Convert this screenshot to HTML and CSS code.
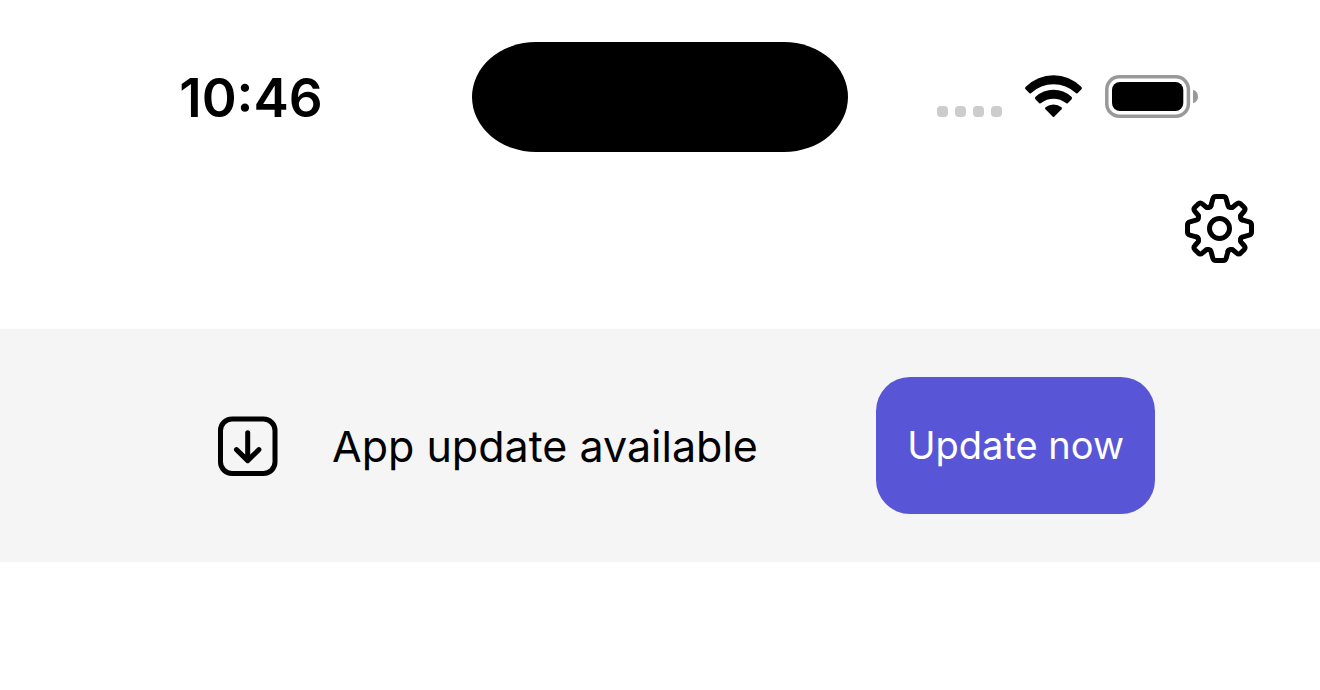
FILE: index.html
```html
<!DOCTYPE html>
<html lang="en">
<head>
    <meta charset="UTF-8">
    <meta name="viewport" content="width=device-width, initial-scale=1.0">
    <title>App update</title>
    <link rel="stylesheet" href="styles.css">
</head>
<body>
    <div class="status-bar">
        <div class="time">10:46</div>
        <div class="island"></div>
        <div class="status-icons">
            <div class="signal">
                <span class="signal-dot"></span>
                <span class="signal-dot"></span>
                <span class="signal-dot"></span>
                <span class="signal-dot"></span>
            </div>
            <svg class="wifi" width="57" height="43" viewBox="0 0 57 43" aria-hidden="true">
                <path d="M.8 11.8A39 39 0 0 1 56.2 11.8Q57.5 13 56.4 14.3L52.8 18Q51.9 19 50.8 17.9A33 33 0 0 0 6.2 17.9Q5.1 19 4.2 18L.6 14.3Q-.5 13 .8 11.8Z"/>
                <path d="M10.6 21.8A26 26 0 0 1 46.4 21.8Q47.7 23 46.6 24.3L43 28Q42 29 40.9 28.1A20 20 0 0 0 16.1 28.1Q15 29 14 28L10.4 24.3Q9.3 23 10.6 21.8Z"/>
                <path d="M20.5 32.2A13 13 0 0 1 36.5 32.2Q37.5 33.1 36.5 34.2L29.2 41.7Q28.5 42.4 27.8 41.7L20.5 34.2Q19.5 33.1 20.5 32.2Z"/>
            </svg>
            <svg class="battery" width="93" height="43" viewBox="0 0 93 43" aria-hidden="true">
                <rect x="1.8" y="1.8" width="81.6" height="39.4" rx="12.5" fill="none" stroke="#999" stroke-width="3.5"/>
                <rect x="7" y="7" width="71.3" height="29" rx="8"/>
                <path d="M88 14.8Q93 16.5 93 21.5T88 28.2Z" fill="#999"/>
            </svg>
        </div>
    </div>

    <header class="toolbar">
        <button class="settings-btn" type="button" aria-label="Settings">
            <svg width="69" height="69" viewBox="-34.5 -34.5 69 69" aria-hidden="true">
                <defs>
                    <path id="gear-quarter" d="M-8.6 -22.6L-6.7 -29.6Q-6 -32-3.6 -32H3.6Q6 -32 6.7 -29.6L8.6 -22.6Q9 -21.4 10.2 -21.1L12.8 -21L17.2 -24.6Q19.3 -26.4 21.2 -24.6L24.6 -21.2Q26.4 -19.3 24.6 -17.2L21 -12.8L21.1 -10.2Q21.4 -9 22.6 -8.6"/>
                </defs>
                <g fill="none" stroke="#000" stroke-width="5" stroke-linecap="round" stroke-linejoin="round">
                    <use href="#gear-quarter"/>
                    <use href="#gear-quarter" transform="rotate(90)"/>
                    <use href="#gear-quarter" transform="rotate(180)"/>
                    <use href="#gear-quarter" transform="rotate(270)"/>
                    <circle r="10"/>
                </g>
            </svg>
        </button>
    </header>

    <section class="update-banner">
        <svg class="update-icon" width="60" height="60" viewBox="0 0 60 60" fill="none" stroke="#000" stroke-width="5" stroke-linecap="round" stroke-linejoin="round" aria-hidden="true">
            <rect x="2.5" y="3" width="54.5" height="54.5" rx="11.5"/>
            <path d="M29.7 16.8V44.3M18.5 33.6L29.7 44.6L40.9 33.6"/>
        </svg>
        <p class="update-text">App update available</p>
        <button class="update-btn" type="button">Update now</button>
    </section>
</body>
</html>
```

FILE: styles.css
```css
* {
    margin: 0;
    padding: 0;
    box-sizing: border-box;
    font-family: Inter, 'Liberation Sans', sans-serif;
}

body {
    background-color: #fff;
    color: #000;
}

button {
    border: none;
    cursor: pointer;
}

.status-bar {
    display: grid;
    grid-template-columns: 1fr 376px 1fr;
    align-items: center;
    padding-top: 42px;
}

.time {
    padding-top: 2px;
    padding-left: 30px;
    text-align: center;
    font-size: 53px;
    font-weight: 600;
    line-height: 64px;
}

.island {
    height: 110px;
    background-color: #000;
    border-radius: 64px / 55px;
}

.status-icons {
    display: flex;
    justify-content: flex-end;
    align-items: flex-end;
    gap: 23px;
    padding-right: 122px;
    padding-bottom: 2px;
}

.signal {
    display: flex;
    gap: 7px;
    padding-bottom: 1px;
}

.signal-dot {
    width: 11px;
    height: 11px;
    background-color: #ccc;
    border-radius: 4px;
}

.toolbar {
    display: flex;
    justify-content: flex-end;
    padding: 42px 66px 66px;
}

.settings-btn {
    display: flex;
    background: none;
}

.update-banner {
    display: flex;
    align-items: center;
    padding: 48px 165px 48px 218px;
    background-color: #f5f5f5;
}

.update-text {
    margin: 0 auto 0 54px;
    font-size: 43px;
    line-height: 54px;
}

.update-btn {
    padding: 44px 31px 45px;
    background-color: #5856d6;
    color: #fff;
    border-radius: 34px;
    font-size: 38px;
    line-height: 48px;
}
```
